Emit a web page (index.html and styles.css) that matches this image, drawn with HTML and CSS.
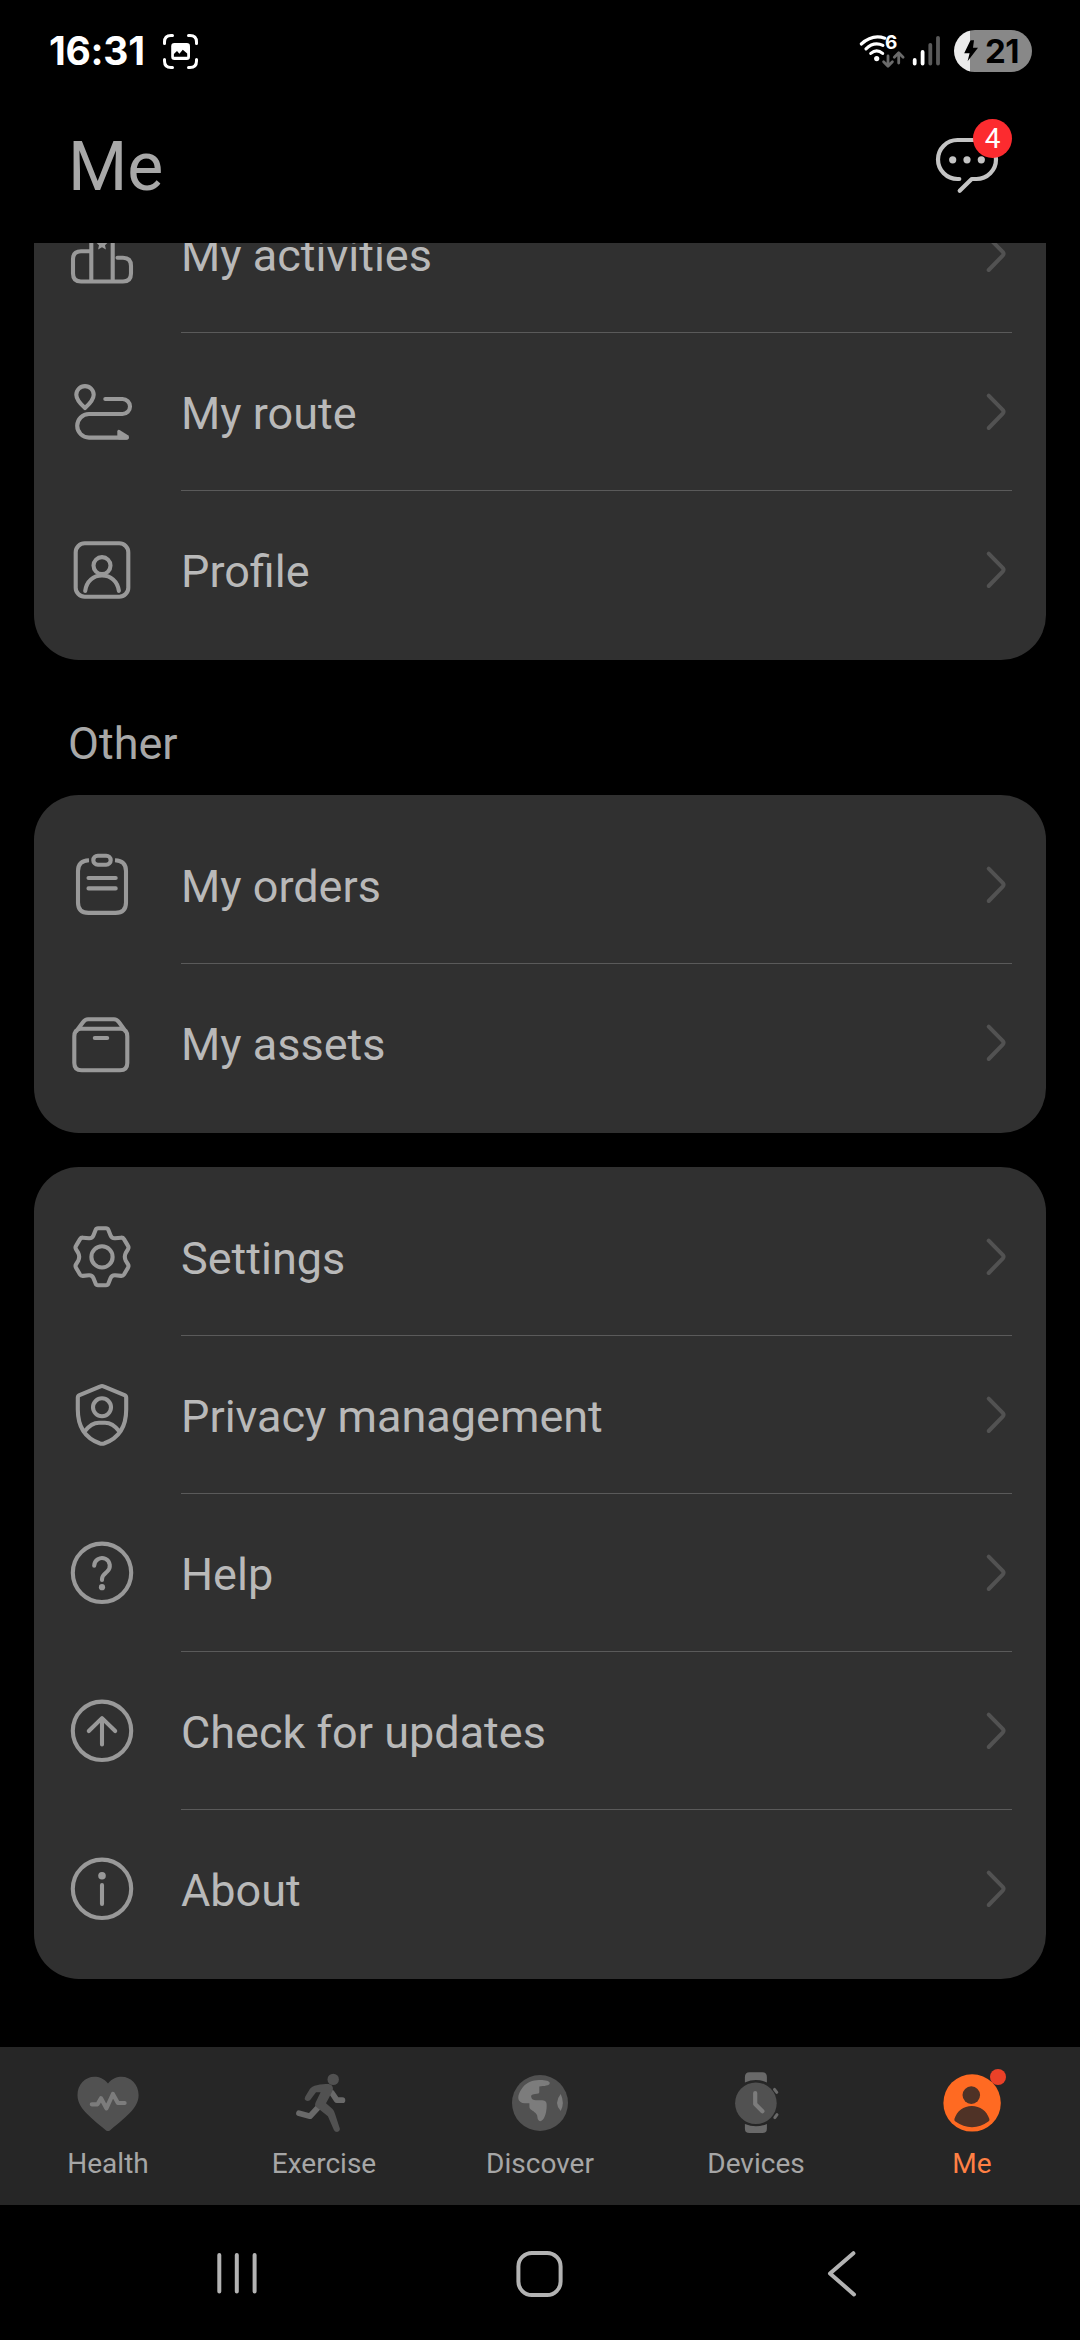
FILE: index.html
```html
<!DOCTYPE html>
<html lang="en">
<head>
<meta charset="utf-8">
<title>Me</title>
<link rel="stylesheet" href="styles.css">
</head>
<body>
<svg class="defs" width="0" height="0">
  <symbol id="chevron" viewBox="0 -0.5 36 73"><path d="M12.7 20.2 26.7 34.4Q28.4 36.3 26.7 38.2L12.7 52.5"/></symbol>
</svg>
<div class="phone">
  <div class="status">
    <span class="clock">16:31</span>
    <svg class="capture" viewBox="0 0 35 35">
      <path class="corners" d="M1.5 9.5V8Q1.5 1.5 8 1.5H9.5M25.5 1.5H27Q33.5 1.5 33.5 8V9.5M33.5 25.5V27Q33.5 33.5 27 33.5H25.5M9.5 33.5H8Q1.5 33.5 1.5 27V25.5"/>
      <rect x="8.2" y="9" width="18.8" height="17" rx="3.2" fill="#fff"/>
      <path d="M10.9 22.8V20L14 17 16.4 19.7 19.8 15.7 24.2 19.6V22.8Z" fill="#000"/>
    </svg>
    <div class="indicators">
      <div class="wifi">
        <svg viewBox="0 0 46 36" width="46" height="36">
          <g class="waves">
            <path d="M3.3 12Q14.5 1.8 26.8 6.2"/>
            <path d="M8 16.8Q16 9.2 24.9 13.4"/>
            <path d="M12.8 21.4Q18.7 16.4 24.6 21.4"/>
          </g>
          <circle cx="18.7" cy="26.6" r="2.6" fill="#fff"/>
          <path class="traffic" d="M30 24V34M25.6 29.8 30 34.2 34.4 29.8M40.7 31V21.5M36.3 25.2 40.7 20.8 45.1 25.2"/>
        </svg>
        <span class="wifi-gen">6</span>
      </div>
      <svg class="signal" viewBox="0 0 28 30">
        <path d="M2.7 24V27.5M10.6 16V27.5" stroke="#fff"/>
        <path d="M18.3 8.8V27.5M26 1.8V27.5" stroke="#5a5a5a"/>
      </svg>
      <div class="battery">
        <svg viewBox="0 0 16 24" width="16" height="24"><path d="M7 2.3Q7.4 1.3 8.5 1.3H11L10 8.7H15L4.6 22.3 6.6 14.3H1.2Z"/></svg>
        <span>21</span>
      </div>
    </div>
  </div>

  <header class="header">
    <h1>Me</h1>
    <div class="messages">
      <svg viewBox="0 0 72 72" width="72" height="72">
        <path d="M29.3 51H27.5A19.5 19.5 0 0 1 27.5 12H46.5A19.5 19.5 0 0 1 46.5 51H41.7L29.7 62.7"/>
        <g class="dots"><circle cx="22.7" cy="31.8" r="3.6"/><circle cx="37" cy="31.8" r="3.6"/><circle cx="51.3" cy="31.8" r="3.6"/></g>
      </svg>
      <span class="badge">4</span>
    </div>
  </header>

  <main class="content">
    <section class="card scrolled">
      <div class="row">
        <svg class="icon" viewBox="0 -0.5 72 73"><path d="M25.3 33.8H15Q7 33.8 7 41.8V56Q7 64 15 64H57Q65 64 65 56V48.5Q65 40.3 57 40.3H51.5M25.3 64V14Q25.3 8 31 8H41Q46.7 8 46.7 14V64"/><path class="solid" d="M36 20 37.8 24.2 42.2 24.7 39 27.7 39.9 32 36 29.8 32.1 32 33 27.7 29.8 24.7 34.2 24.2Z"/></svg>
        <div class="line"><span>My activities</span><svg class="chev"><use href="#chevron"/></svg></div>
      </div>
      <div class="row">
        <svg class="icon" viewBox="0 -0.5 72 73"><path d="M19 32.6C15 29 10.3 24 10.3 19.3A8.7 8.7 0 0 1 27.7 19.3C27.7 24 23 29 19 32.6ZM39.3 23.5H56.5A7.5 7.5 0 0 1 56.5 38.5H23A11.8 11.8 0 0 0 23 62.1H60.5"/><path class="solid" d="M51.3 63V56Q51.5 53.6 53.6 54.6L62 59.8Q64 62 62 64H53Z"/></svg>
        <div class="line"><span>My route</span><svg class="chev"><use href="#chevron"/></svg></div>
      </div>
      <div class="row">
        <svg class="icon" viewBox="0 -0.5 72 73"><rect x="9.7" y="9.8" width="52.6" height="53.4" rx="9"/><circle cx="36" cy="32.1" r="8.5"/><path d="M19.2 57.4C20.5 47.5 27.5 42 36 42S51.5 47.5 52.9 57.4"/></svg>
        <div class="line"><span>Profile</span><svg class="chev"><use href="#chevron"/></svg></div>
      </div>
    </section>

    <h2>Other</h2>

    <section class="card">
      <div class="row">
        <svg class="icon" viewBox="0 -0.5 72 73"><path class="butt" d="M23 11.8Q12 12.3 12 22.5V54Q12 64.4 22.5 64.4H49.5Q60 64.4 60 54V22.5Q60 12.3 49 11.8"/><rect x="27.3" y="7.2" width="17.4" height="9" rx="4.5"/><path d="M22.5 29.5H49.7M22.5 39.9H49.7"/></svg>
        <div class="line"><span>My orders</span><svg class="chev"><use href="#chevron"/></svg></div>
      </div>
      <div class="row">
        <svg class="icon" viewBox="0 -0.5 72 73"><path d="M14.5 22.2H55.3Q61.3 23 61.3 30V56.5Q61.3 63.8 54 63.8H15.6Q8.3 63.8 8.3 56.5V30Q8.3 23 14.5 22.2ZM10.5 24.5 16.8 16Q19.2 12.8 22 12.8H48Q50.8 12.8 53.2 16L59.3 24.5M28.8 31.5H41.2"/></svg>
        <div class="line"><span>My assets</span><svg class="chev"><use href="#chevron"/></svg></div>
      </div>
    </section>

    <section class="card spaced">
      <div class="row">
        <svg class="icon" viewBox="0 -0.5 72 73"><path d="M32 7.8H40Q41.7 7.8 42.3 9.3L44.6 15Q45.8 18 49 17.8L55 17.2Q57 17 58 18.6L62 25.4Q63 27 62 28.7L59.8 32.4Q57.8 36.3 59.8 40.2L62 43.9Q63 45.6 62 47.2L58 54Q57 55.6 55 55.4L49 54.8Q45.8 54.6 44.6 57.6L42.3 63.3Q41.7 64.8 40 64.8H32Q30.3 64.8 29.7 63.3L27.4 57.6Q26.2 54.6 23 54.8L17 55.4Q15 55.6 14 54L10 47.2Q9 45.6 10 43.9L12.2 40.2Q14.2 36.3 12.2 32.4L10 28.7Q9 27 10 25.4L14 18.6Q15 17 17 17.2L23 17.8Q26.2 18 27.4 15L29.7 9.3Q30.3 7.8 32 7.8Z"/><circle cx="36" cy="36.4" r="10.6"/></svg>
        <div class="line"><span>Settings</span><svg class="chev"><use href="#chevron"/></svg></div>
      </div>
      <div class="row">
        <svg class="icon" viewBox="0 -0.5 72 73"><path d="M34.5 7.8Q36 7.1 37.5 7.8L58.5 16.6Q60.2 17.4 60.2 19.2V31C60.2 48 53 59.5 38.5 64.8Q36 65.8 33.5 64.8C19 59.5 11.8 48 11.8 31V19.2Q11.8 17.4 13.5 16.6ZM18.8 52.8C23 47.2 27 44.2 33 44.2H39C45 44.2 49 47.2 53.2 52.8"/><circle cx="36" cy="28.8" r="9"/></svg>
        <div class="line"><span>Privacy management</span><svg class="chev"><use href="#chevron"/></svg></div>
      </div>
      <div class="row">
        <svg class="icon" viewBox="0 -0.5 72 73"><circle cx="36" cy="36.3" r="29.2"/><path d="M28.2 29.2A7.8 7.8 0 1 1 41 35.3C38 37.7 36 38.8 36 42.6V43.4"/><circle class="solid" cx="36" cy="50.7" r="3.1"/></svg>
        <div class="line"><span>Help</span><svg class="chev"><use href="#chevron"/></svg></div>
      </div>
      <div class="row">
        <svg class="icon" viewBox="0 -0.5 72 73"><circle cx="36" cy="36.3" r="29.2"/><path d="M36 24V50M22.8 36.5 36 23.6 49.2 36.5"/></svg>
        <div class="line"><span>Check for updates</span><svg class="chev"><use href="#chevron"/></svg></div>
      </div>
      <div class="row">
        <svg class="icon" viewBox="0 -0.5 72 73"><circle cx="36" cy="36.3" r="29.2"/><circle class="solid" cx="36" cy="23.2" r="3.8"/><path d="M36 32.5V51.5"/></svg>
        <div class="line"><span>About</span><svg class="chev"><use href="#chevron"/></svg></div>
      </div>
    </section>
  </main>

  <nav class="tabs">
    <div class="tab">
      <svg viewBox="0 0 72 72"><path fill="#515151" d="M36 16.4C32 11.5 27 9.7 22.5 9.7C13 9.7 5.5 17.5 5.5 28C5.5 40 15 47.5 33.8 63.2Q36 65 38.2 63.2C57 47.5 66.6 40 66.6 28C66.6 17.5 59 9.7 49.5 9.7C45 9.7 40 11.5 36 16.4Z"/><path class="detail" d="M19.8 37.3H25.5L29 31.3 34.4 41.3 40.9 27 45.9 36H52.6"/></svg>
      <span>Health</span>
    </div>
    <div class="tab">
      <svg viewBox="0 0 72 72"><path class="limb" d="M44 26 48.8 33.2H54.4M11 46.3 22 49.2 30 40.5"/><g fill="#515151"><circle cx="45.2" cy="12.4" r="5.7"/><path d="M26.5 18.7Q33 16.5 40.6 17Q44.9 17.6 45 22Q45 23.6 38 36.3L44.5 42Q46.4 44 47 46.8L51.8 61.6Q52.2 64.6 49 65Q46.8 65 45.9 63L39.9 49.2 28.4 40Q26.2 38.4 27.6 35.4L32.6 25.2H28L22 33.2Q19.5 34.8 17.6 33.2Q16 31.6 17.3 29.4L22 21.8Q23.8 19.5 26.5 18.7Z"/></g></svg>
      <span>Exercise</span>
    </div>
    <div class="tab">
      <svg viewBox="0 0 72 72"><circle cx="36" cy="36" r="28" fill="#515151"/><path fill="#7c7c7c" d="M35 13C40 12.8 45.5 13.6 45.8 16C45.6 18.8 40 19 35.3 19.4V25C35.3 26.8 34 26.8 31 26.9C27.6 27.2 27 28.4 27.2 30C27.6 32.4 29.4 33 32 33.2C37 33.6 42.2 32.2 42.6 37C43 43 41.6 49 39 52.6Q35.8 56 34 52.6C33 50 34 48.5 31.5 46C29 43.5 25.6 42.6 25.4 40V36.3C21 36.5 17 36.3 15 33.4C13 30 15.5 24.5 19 20C23 15.3 28.5 13.2 35 13ZM56.7 27Q61 36 56.7 44Q49.4 36 56.7 27Z"/></svg>
      <span>Discover</span>
    </div>
    <div class="tab">
      <svg viewBox="0 0 72 72"><path fill="#696969" d="M24.9 15.4V10Q24.9 5.3 29.5 5.3H42.3Q46.9 5.3 46.9 10V15.4Q36 10.6 24.9 15.4ZM24.9 57V61.4Q24.9 66 29.5 66H42.3Q46.9 66 46.9 61.4V57Q36 61.6 24.9 57Z"/><circle cx="35.9" cy="36.2" r="20.8" fill="#515151"/><path class="detail" d="M35.2 26V37L42.4 44.2"/><path stroke="#696969" stroke-width="3" d="M54.5 22.4 56.8 25.4M54.8 50.6 57 47.6"/></svg>
      <span>Devices</span>
    </div>
    <div class="tab active">
      <svg viewBox="0 0 72 72"><circle cx="36.1" cy="35.9" r="28.7" fill="#ff6a22"/><circle cx="35.3" cy="28.1" r="8.8" fill="#4f3226"/><path fill="#4f3226" d="M18.4 52C21 44 27.5 39 35.8 39S50.8 44 53.4 52Q53.8 53.6 52.4 54.6C47 58.6 42 60.2 36 60.2S25 58.6 19.4 54.6Q18 53.6 18.4 52Z"/><circle cx="62" cy="10" r="8" fill="#ea4128"/></svg>
      <span>Me</span>
    </div>
  </nav>

  <div class="sysnav">
    <svg viewBox="0 0 48 48"><path d="M7.3 5V41.5M24.8 5V41.5M42.6 5V41.5"/></svg>
    <svg viewBox="0 0 48 48"><rect x="2.4" y="2.9" width="42.2" height="42.2" rx="13.5"/></svg>
    <svg viewBox="0 0 48 48"><path d="M33.4 3.2 10 23.5 34 44.4"/></svg>
  </div>
</div>
</body>
</html>
```

FILE: styles.css
```css
* { box-sizing: border-box; }
body { margin: 0; background: #000; font-family: Roboto, "Liberation Sans", sans-serif; }
svg { display: block; flex: none; fill: none; stroke-linecap: round; stroke-linejoin: round; overflow: visible; }
.defs { position: absolute; }
h1, h2 { margin: 0; font-weight: 400; }
.phone { width: 1080px; height: 2340px; display: flex; flex-direction: column; overflow: hidden; background: #000; }

/* status bar */
.status { height: 102px; padding: 0 48px 0 49px; display: flex; align-items: center; flex: none; font-family: Inter, "Open Sans", sans-serif; font-weight: 700; }
.clock { width: 114px; color: #fff; font-size: 39px; line-height: 48px; letter-spacing: -0.3px; }
.capture { width: 35px; height: 35px; }
.corners { stroke: #fff; stroke-width: 3; }
.indicators { margin-left: auto; display: flex; align-items: center; }
.wifi { position: relative; margin: -2px 8px 0 0; }
.waves { stroke: #fff; stroke-width: 3.2; }
.traffic { stroke: #6a6a6a; stroke-width: 2.8; }
.wifi-gen { position: absolute; left: 27px; top: 0; color: #fff; font-size: 19px; line-height: 22px; }
.signal { width: 28px; height: 30px; margin-right: 14px; stroke-width: 3.8; }
.battery { width: 78px; height: 42px; border-radius: 21px; background: linear-gradient(90deg, #ebebeb 16px, #888 16px); display: flex; align-items: center; gap: 6px; padding-left: 9px; color: #000; font-size: 33px; line-height: 42px; letter-spacing: -0.6px; }
.battery svg { fill: #000; }

/* page header */
.header { height: 141px; padding: 0 78px 0 68px; display: flex; align-items: flex-start; justify-content: space-between; flex: none; }
h1 { color: #a8a8a8; font-size: 68px; line-height: 80px; margin-top: 25px; }
.messages { position: relative; margin-top: 26px; }
.messages svg { stroke: #c4c4c4; stroke-width: 4.2; }
.messages .dots { fill: #c4c4c4; stroke: none; }
.badge { position: absolute; left: 43px; top: -9px; width: 39px; height: 39px; border-radius: 50%; background: #fc2b2f; color: #fff; font-size: 28px; line-height: 40px; text-align: center; }

/* menu cards */
.content { height: 1804px; padding: 0 34px; overflow: hidden; flex: none; }
.card { background: #303030; border-radius: 45px; padding: 11px 0 12px; }
.scrolled { margin-top: -79px; }
.spaced { margin-top: 34px; }
.row { display: flex; align-items: center; padding: 0 34px 0 32px; gap: 43px; }
.icon { width: 72px; height: 73px; margin-bottom: 1px; stroke: #999; stroke-width: 4.1; }
.solid { fill: #999; stroke: none; }
.butt { stroke-linecap: butt; }
.line { flex: 1; height: 158px; border-bottom: 1px solid #5a5a5a; display: flex; align-items: center; justify-content: space-between; }
.row:last-child .line { height: 157px; border-bottom: 0; }
.line span { color: #b9b9b9; font-size: 45px; line-height: 53px; padding-top: 3px; white-space: nowrap; }
.chev { width: 36px; height: 73px; stroke: #525252; stroke-width: 4; }
h2 { color: #a8a8a8; font-size: 45px; line-height: 53px; padding: 57px 34px 25px; }

/* bottom tabs */
.tabs { height: 158px; background: #262626; display: grid; grid-template-columns: repeat(5, 1fr); flex: none; }
.tab { display: flex; flex-direction: column; align-items: center; padding-top: 20px; color: #a6a6a6; font-size: 28px; line-height: 34px; }
.tab svg { width: 72px; height: 72px; margin-bottom: 8px; }
.detail { stroke: #7c7c7c; stroke-width: 4.2; }
.limb { stroke: #696969; stroke-width: 5.8; }
.active { color: #ff8044; }

/* system navigation */
.sysnav { flex: 1; display: flex; justify-content: space-between; padding: 45px 212px 0; }
.sysnav svg { width: 48px; height: 48px; stroke: #b3b3b3; stroke-width: 4; }
```
